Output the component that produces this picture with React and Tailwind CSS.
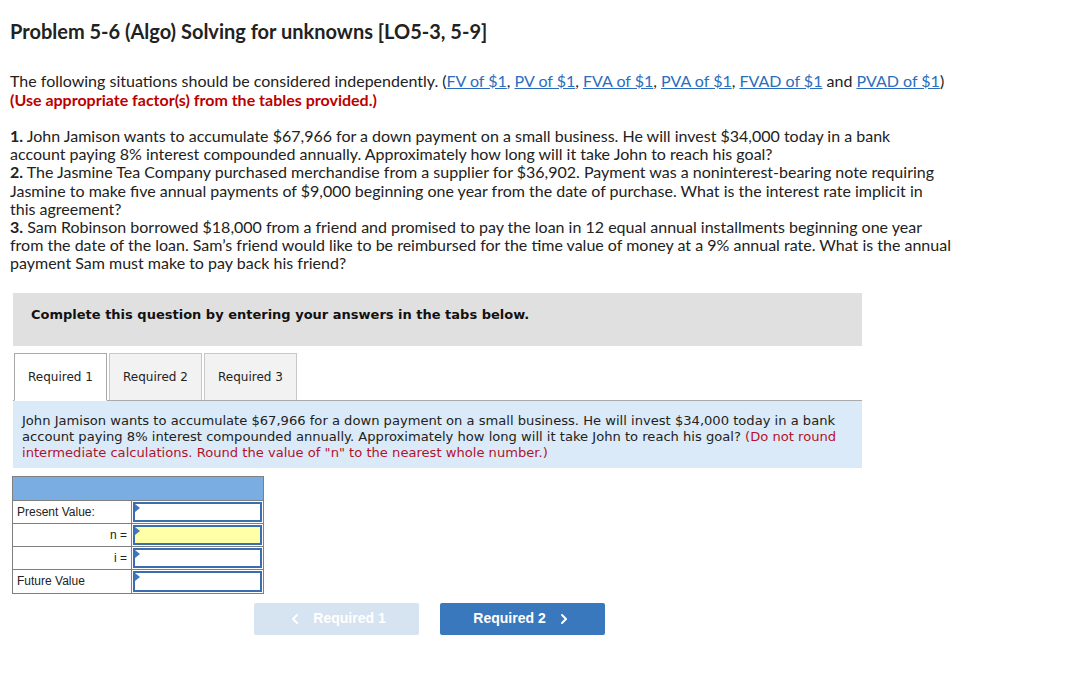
import { ChevronLeft, ChevronRight } from 'lucide-react';

const body = { fontFamily: 'Lato, "Open Sans", Arial, sans-serif' };
const verdana = { fontFamily: '"DejaVu Sans", Verdana, sans-serif' };
const arial = { fontFamily: '"Liberation Sans", Arial, sans-serif' };

const links = ['FV of $1', 'PV of $1', 'FVA of $1', 'PVA of $1', 'FVAD of $1'];

const Row = ({ label, right, yellow }) => (
  <div className="flex h-[23px] border-b border-[#7f7f7f] last:border-b-0">
    <div className={`w-[119px] border-r border-[#7f7f7f] px-1 flex items-center text-[12px] text-[#222] ${right ? 'justify-end' : ''}`}>
      {label}
    </div>
    <div className={`relative flex-1 m-[1px] border-2 border-[#3b6eb0] ${yellow ? 'bg-[#ffffa8]' : 'bg-white'}`}>
      <span className="absolute left-0 top-0 w-0 h-0 border-t-[4px] border-b-[4px] border-l-[5px] border-t-transparent border-b-transparent border-l-[#3b77c4]" />
    </div>
  </div>
);

export default function App() {
  return (
    <div className="bg-white text-[#222] w-[1092px] h-[679px] overflow-hidden" style={body}>
      <div className="pl-[10px] pt-[19px]">
        <h1 className="text-[20px] leading-[24px] font-bold text-[#222]">Problem 5-6 (Algo) Solving for unknowns [LO5-3, 5-9]</h1>

        <p className="mt-[28px] text-[16px] leading-[19px]">
          The following situations should be considered independently. (
          {links.map((l, i) => (
            <span key={l}>
              <a className="text-[#2a6ebd] underline">{l}</a>
              {i < links.length - 1 ? ', ' : ' '}
            </span>
          ))}
          and <a className="text-[#2a6ebd] underline">PVAD of $1</a>)
          <br />
          <span className="font-bold text-[#b00]">(Use appropriate factor(s) from the tables provided.)</span>
        </p>

        <div className="mt-[18px] w-[970px] text-[16px] leading-[18.2px]">
          <p><b>1.</b> John Jamison wants to accumulate $67,966 for a down payment on a small business. He will invest $34,000 today in a bank<br />account paying 8% interest compounded annually. Approximately how long will it take John to reach his goal?</p>
          <p><b>2.</b> The Jasmine Tea Company purchased merchandise from a supplier for $36,902. Payment was a noninterest-bearing note requiring<br />Jasmine to make five annual payments of $9,000 beginning one year from the date of purchase. What is the interest rate implicit in<br />this agreement?</p>
          <p><b>3.</b> Sam Robinson borrowed $18,000 from a friend and promised to pay the loan in 12 equal annual installments beginning one year<br />from the date of the loan. Sam’s friend would like to be reimbursed for the time value of money at a 9% annual rate. What is the annual<br />payment Sam must make to pay back his friend?</p>
        </div>
      </div>

      <div className="ml-[13px] mt-[20px] w-[849px]" style={verdana}>
        <div className="bg-[#e0e0e0] h-[53px] pt-[14px] pl-[18px] text-[13px] leading-[16px] font-bold text-[#111]">
          Complete this question by entering your answers in the tabs below.
        </div>

        <div className="mt-[8px] flex items-end h-[47px] border-b border-[#a9a9a9] pl-[1px] gap-[2px]">
          <div className="h-[48px] w-[93px] -mb-px bg-white border border-[#a9a9a9] border-b-white flex items-center justify-center text-[12px]">Required 1</div>
          <div className="h-[47px] w-[93px] bg-[#f2f2f2] border border-[#c8c8c8] border-b-0 flex items-center justify-center text-[12px]">Required 2</div>
          <div className="h-[47px] w-[93px] bg-[#f2f2f2] border border-[#c8c8c8] border-b-0 flex items-center justify-center text-[12px]">Required 3</div>
        </div>

        <div className="bg-[#dbeaf8] h-[67px] px-[9px] pt-[12px] text-[13.1px] leading-[16px] text-[#222]">
          John Jamison wants to accumulate $67,966 for a down payment on a small business. He will invest $34,000 today in a bank account paying 8% interest compounded annually. Approximately how long will it take John to reach his goal? <span className="text-[#b4122c]">(Do not round intermediate calculations. Round the value of "n" to the nearest whole number.)</span>
        </div>
      </div>

      <div className="ml-[12px] mt-[8px] w-[252px] border border-[#7f7f7f]" style={arial}>
        <div className="h-[24px] bg-[#7aaee3] border-b border-[#7f7f7f]" />
        <Row label="Present Value:" />
        <Row label="n =" right yellow />
        <Row label="i =" right />
        <Row label="Future Value" />
      </div>

      <div className="ml-[254px] mt-[9px] flex gap-[21px]" style={arial}>
        <button className="w-[165px] h-[32px] rounded-[2px] bg-[#d6e3f1] text-white font-bold text-[14px] flex items-center justify-center gap-[10px]">
          <ChevronLeft size={16} strokeWidth={3} />
          Required 1
        </button>
        <button className="w-[165px] h-[32px] rounded-[2px] bg-[#3a78bd] text-white font-bold text-[14px] flex items-center justify-center gap-[10px]">
          Required 2
          <ChevronRight size={16} strokeWidth={3} />
        </button>
      </div>
    </div>
  );
}
